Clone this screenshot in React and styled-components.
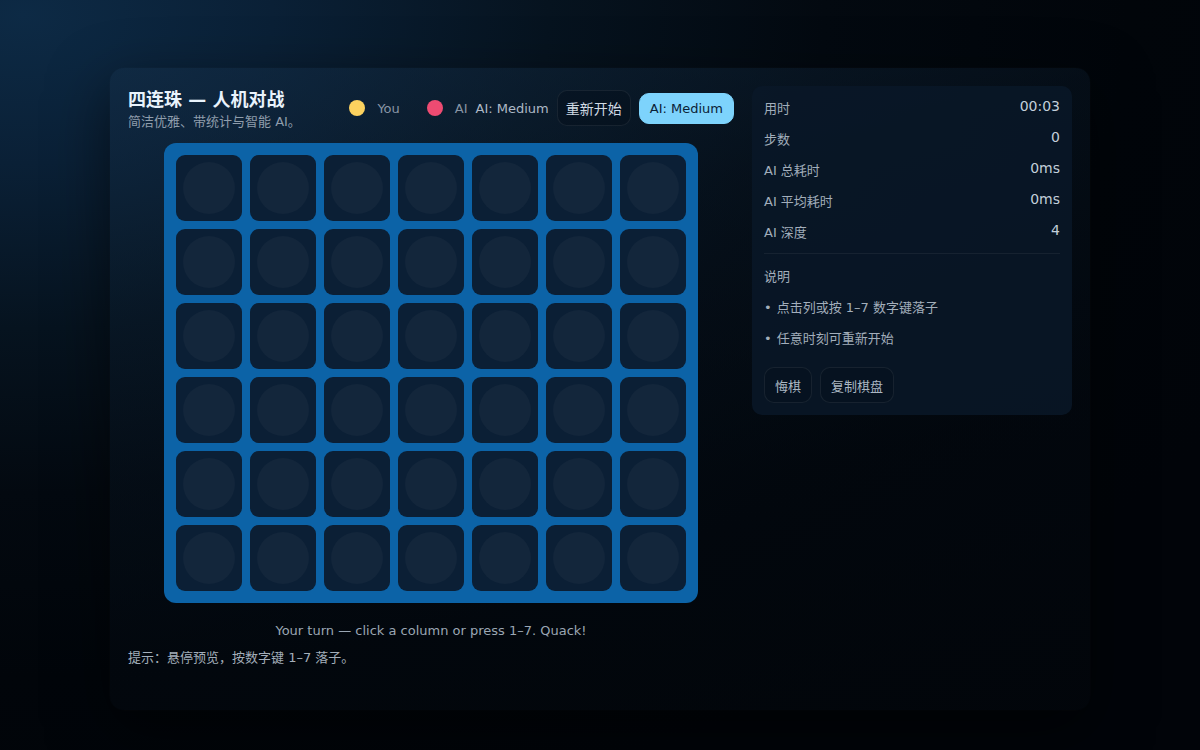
import React from "react";
import styled, { createGlobalStyle } from "styled-components";

const Global = createGlobalStyle`
  html, body { margin: 0; padding: 0; }
  body {
    min-height: 750px;
    background: radial-gradient(ellipse 115% 110% at 2% 2%, #0d2a45 0%, #0a2036 18%, #06131f 38%, #030910 58%, #01050a 80%, #010409 100%);
    font-family: "DejaVu Sans", "Noto Sans CJK SC", sans-serif;
    color: #dbe6f0;
  }
`;

const Page = styled.div`
  padding: 68px 0 40px;
  display: flex;
  justify-content: center;
`;

const Card = styled.div`
  width: 980px;
  min-height: 642px;
  box-sizing: border-box;
  padding: 18px;
  border-radius: 14px;
  background: linear-gradient(165deg, rgba(20, 46, 72, 0.5) 0%, rgba(10, 26, 42, 0.4) 30%, rgba(3, 9, 16, 0.55) 65%, rgba(2, 6, 11, 0.7) 100%);
  box-shadow: 0 20px 60px rgba(0, 0, 0, 0.55), 0 0 0 1px rgba(255, 255, 255, 0.012);
  display: grid;
  grid-template-columns: 1fr 320px;
  gap: 18px;
  align-items: start;
`;

const Main = styled.div`
  display: flex;
  flex-direction: column;
`;

const Header = styled.div`
  display: flex;
  align-items: center;
  justify-content: space-between;
  height: 44px;
`;

const TitleBlock = styled.div`
  display: flex;
  flex-direction: column;
  margin-top: 1px;
`;

const Title = styled.h1`
  margin: 0;
  font-size: 18px;
  font-weight: 700;
  line-height: 24px;
  color: #e9f3fc;
`;

const Subtitle = styled.div`
  font-size: 13px;
  line-height: 16px;
  margin-top: 2px;
  color: #8f9dac;
`;

const Controls = styled.div`
  display: flex;
  align-items: center;
  gap: 8px;
`;

const Legend = styled.div`
  display: flex;
  align-items: center;
  gap: 27px;
`;

const LegendItem = styled.div`
  display: flex;
  align-items: center;
  gap: 12px;
  font-size: 13px;
  color: #8895a5;
`;

const Dot = styled.span`
  width: 16px;
  height: 16px;
  border-radius: 50%;
  background: ${(p) => p.$color};
  display: inline-block;
`;

const LevelLabel = styled.span`
  font-size: 13px;
  color: #aeb9c6;
`;

const Button = styled.button`
  font-family: inherit;
  cursor: pointer;
  border-radius: 10px;
  box-sizing: border-box;
  padding: ${(p) => (p.$primary ? "0 10px" : "0 8px")};
  font-size: ${(p) => (p.$primary ? "13px" : "14px")};
  height: ${(p) => (p.$primary ? "31px" : "36px")};
  color: ${(p) => (p.$primary ? "#0b2236" : "#d0dae4")};
  background: ${(p) => (p.$primary ? "#7dd3fc" : "rgba(4, 12, 22, 0.35)")};
  border: 1px solid ${(p) => (p.$primary ? "#7dd3fc" : "rgba(255, 255, 255, 0.07)")};
`;

const BoardWrap = styled.div`
  display: flex;
  justify-content: center;
  margin-top: 13px;
`;

const Board = styled.div`
  background: #0c63a7;
  border-radius: 12px;
  padding: 12px;
  display: grid;
  grid-template-columns: repeat(7, 66px);
  grid-auto-rows: 66px;
  gap: 8px;
`;

const Cell = styled.div`
  background: #0b1f35;
  border-radius: 9px;
  display: flex;
  align-items: center;
  justify-content: center;
`;

const Hole = styled.div`
  width: 52px;
  height: 52px;
  border-radius: 50%;
  background: #13263b;
`;

const Status = styled.div`
  text-align: center;
  font-size: 13px;
  line-height: 18px;
  color: #9aa6b3;
  margin-top: 19px;
`;

const Hint = styled.div`
  font-size: 13px;
  line-height: 18px;
  color: #a3aeba;
  margin-top: 9px;
`;

const Side = styled.div`
  background: rgba(9, 24, 40, 0.85);
  border-radius: 10px;
  padding: 12px;
  display: flex;
  flex-direction: column;
`;

const StatList = styled.div`
  display: flex;
  flex-direction: column;
  gap: 11px;
  margin-top: -1px;
`;

const StatRow = styled.div`
  display: flex;
  justify-content: space-between;
  align-items: center;
  height: 20px;
`;

const StatLabel = styled.span`
  font-size: 13px;
  color: #a2aebb;
`;

const StatValue = styled.span`
  font-size: 14px;
  color: #c3cfda;
  margin-top: -3px;
`;

const Divider = styled.div`
  height: 1px;
  background: rgba(255, 255, 255, 0.06);
  margin: 12px 0 13px;
`;

const SectionTitle = styled.div`
  font-size: 13px;
  line-height: 20px;
  color: #a2aebb;
`;

const Bullets = styled.ul`
  list-style: none;
  margin: 11px 0 0;
  padding: 0;
  display: flex;
  flex-direction: column;
  gap: 11px;
`;

const Bullet = styled.li`
  font-size: 13px;
  line-height: 20px;
  color: #a2aebb;
  &::before {
    content: "•";
    margin-right: 5px;
  }
`;

const Actions = styled.div`
  display: flex;
  gap: 8px;
  margin-top: 18px;
`;

const SmallButton = styled.button`
  font-family: inherit;
  font-size: 13px;
  height: 36px;
  padding: 0 10px;
  border-radius: 10px;
  color: #aab6c2;
  background: rgba(4, 12, 22, 0.3);
  border: 1px solid rgba(255, 255, 255, 0.07);
  cursor: pointer;
`;

const stats = [
  ["用时", "00:03"],
  ["步数", "0"],
  ["AI 总耗时", "0ms"],
  ["AI 平均耗时", "0ms"],
  ["AI 深度", "4"],
];

export default function App() {
  const cells = Array.from({ length: 42 });
  return (
    <>
      <Global />
      <Page>
        <Card>
          <Main>
            <Header>
              <TitleBlock>
                <Title>四连珠 — 人机对战</Title>
                <Subtitle>简洁优雅、带统计与智能 AI。</Subtitle>
              </TitleBlock>
              <Controls>
                <Legend>
                  <LegendItem>
                    <Dot $color="#fcd25f" />
                    You
                  </LegendItem>
                  <LegendItem>
                    <Dot $color="#ee4b72" />
                    AI
                  </LegendItem>
                </Legend>
                <LevelLabel>AI: Medium</LevelLabel>
                <Button>重新开始</Button>
                <Button $primary>AI: Medium</Button>
              </Controls>
            </Header>
            <BoardWrap>
              <Board>
                {cells.map((_, i) => (
                  <Cell key={i}>
                    <Hole />
                  </Cell>
                ))}
              </Board>
            </BoardWrap>
            <Status>Your turn — click a column or press 1–7. Quack!</Status>
            <Hint>提示：悬停预览，按数字键 1–7 落子。</Hint>
          </Main>
          <Side>
            <StatList>
              {stats.map(([k, v]) => (
                <StatRow key={k}>
                  <StatLabel>{k}</StatLabel>
                  <StatValue>{v}</StatValue>
                </StatRow>
              ))}
            </StatList>
            <Divider />
            <SectionTitle>说明</SectionTitle>
            <Bullets>
              <Bullet>点击列或按 1–7 数字键落子</Bullet>
              <Bullet>任意时刻可重新开始</Bullet>
            </Bullets>
            <Actions>
              <SmallButton>悔棋</SmallButton>
              <SmallButton>复制棋盘</SmallButton>
            </Actions>
          </Side>
        </Card>
      </Page>
    </>
  );
}
